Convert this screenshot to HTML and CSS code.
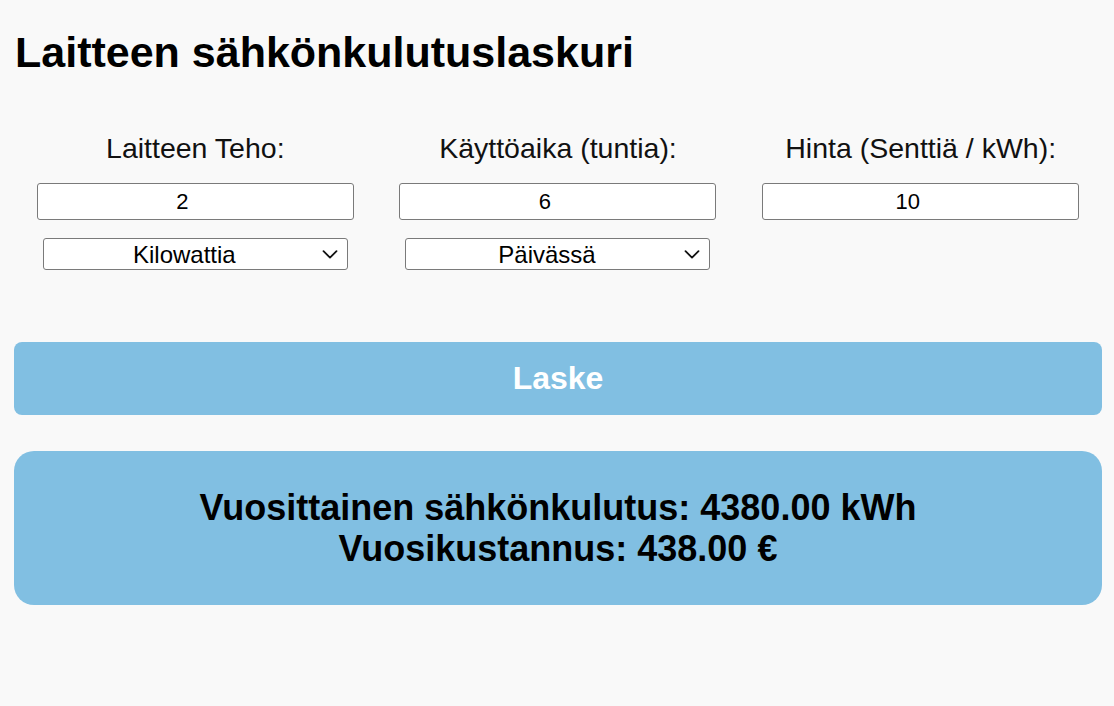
FILE: index.html
```html
<!DOCTYPE html>
<html lang="fi">
<head>
    <meta charset="UTF-8">
    <meta name="viewport" content="width=device-width, initial-scale=1.0">
    <title>Laitteen sähkönkulutuslaskuri</title>
    <link rel="stylesheet" href="styles.css">
</head>
<body>
    <h1>Laitteen sähkönkulutuslaskuri</h1>
    <div class="fields">
        <div class="field">
            <label for="power">Laitteen Teho:</label>
            <input type="number" id="power" value="2">
            <div class="select-wrap">
                <select id="powerUnit">
                    <option>Kilowattia</option>
                    <option>Wattia</option>
                </select>
                <svg class="chevron" width="16" height="9" viewBox="0 0 16 9"><path d="M1.5 1.2 L8 7.6 L14.5 1.2" fill="none" stroke="#111" stroke-width="1.8" stroke-linecap="round" stroke-linejoin="round"/></svg>
            </div>
        </div>
        <div class="field">
            <label for="hours">Käyttöaika (tuntia):</label>
            <input type="number" id="hours" value="6">
            <div class="select-wrap">
                <select id="period">
                    <option>Päivässä</option>
                    <option>Viikossa</option>
                </select>
                <svg class="chevron" width="16" height="9" viewBox="0 0 16 9"><path d="M1.5 1.2 L8 7.6 L14.5 1.2" fill="none" stroke="#111" stroke-width="1.8" stroke-linecap="round" stroke-linejoin="round"/></svg>
            </div>
        </div>
        <div class="field">
            <label for="price">Hinta (Senttiä / kWh):</label>
            <input type="number" id="price" value="10">
        </div>
    </div>
    <button class="calc-button" type="button">Laske</button>
    <div class="result">
        <div>Vuosittainen sähkönkulutus: 4380.00 kWh</div>
        <div>Vuosikustannus: 438.00 €</div>
    </div>
</body>
</html>
```

FILE: styles.css
```css
/* Basic reset */
* {
    box-sizing: border-box;
}

body {
    margin: 0;
    padding: 0 12px 0 14px;
    background-color: #f9f9f9;
    color: #000;
    font-family: "Liberation Sans", Arial, sans-serif;
}

h1 {
    margin: 28px 0 55px 1px;
    font-size: 43px;
    line-height: 49px;
    font-weight: bold;
}

/* Input columns */
.fields {
    display: grid;
    grid-template-columns: repeat(3, 1fr);
}

.field {
    display: flex;
    flex-direction: column;
    align-items: center;
}

label {
    font-size: 28.5px;
    line-height: 32px;
    margin-bottom: 19px;
    color: #111;
}

/* room on the right where the spin buttons would sit */
input[type="number"] {
    width: 317px;
    height: 37px;
    padding: 0 27px 0 1px;
    border: 1px solid #7a7a7a;
    border-radius: 3px;
    background-color: #fff;
    font-family: inherit;
    font-size: 22px;
    text-align: center;
    color: #000;
    -moz-appearance: textfield;
}

input[type="number"]::-webkit-inner-spin-button,
input[type="number"]::-webkit-outer-spin-button {
    -webkit-appearance: none;
    margin: 0;
}

.select-wrap {
    position: relative;
    margin-top: 18px;
    width: 305px;
}

select {
    width: 100%;
    height: 32px;
    padding: 0 30px 0 8px;
    border: 1px solid #7a7a7a;
    border-radius: 3px;
    background-color: #fff;
    font-family: inherit;
    font-size: 24px;
    color: #000;
    text-align: center;
    text-align-last: center;
    appearance: none;
    -webkit-appearance: none;
}

.chevron {
    position: absolute;
    right: 10px;
    top: 12px;
    pointer-events: none;
}

/* Button */
.calc-button {
    display: block;
    width: 100%;
    height: 73px;
    margin-top: 72px;
    border: none;
    border-radius: 8px;
    background-color: #81bfe2;
    color: #fff;
    font-family: inherit;
    font-size: 32px;
    font-weight: bold;
    cursor: pointer;
}

/* Result box */
.result {
    margin-top: 36px;
    padding: 36px 20px;
    border-radius: 20px;
    background-color: #81bfe2;
    text-align: center;
    font-size: 36px;
    line-height: 41px;
    font-weight: bold;
}
```
